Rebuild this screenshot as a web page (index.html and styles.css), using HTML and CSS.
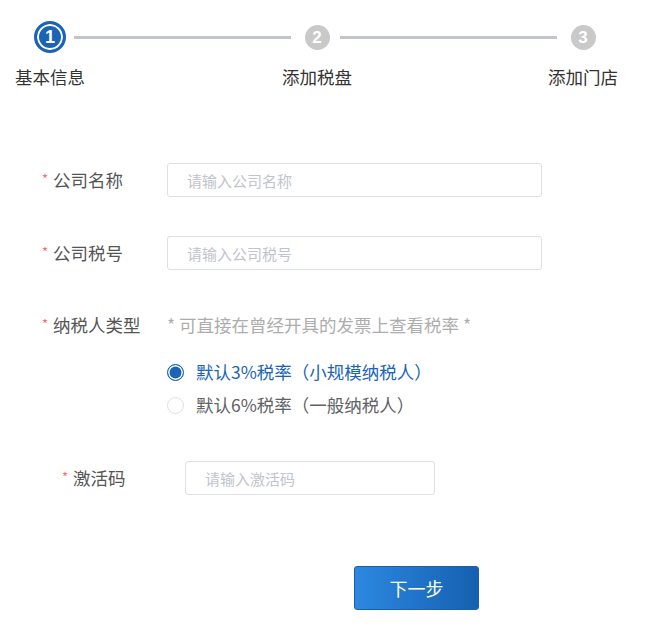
FILE: index.html
```html
<!DOCTYPE html>
<html lang="zh">
<head>
<meta charset="utf-8">
<title>基本信息</title>
<link rel="stylesheet" href="styles.css">
</head>
<body>
<div class="steps">
  <div class="step">
    <div class="dot-box"><span class="dot dot-active">1</span></div>
    <div class="step-label">基本信息</div>
  </div>
  <div class="line line-a"></div>
  <div class="step">
    <div class="dot-box"><span class="dot">2</span></div>
    <div class="step-label">添加税盘</div>
  </div>
  <div class="line line-b"></div>
  <div class="step">
    <div class="dot-box"><span class="dot">3</span></div>
    <div class="step-label">添加门店</div>
  </div>
</div>

<form class="form">
  <div class="row row-1">
    <div class="label"><span class="star">*</span>公司名称</div>
    <div class="input input-wide"><span class="ph">请输入公司名称</span></div>
  </div>
  <div class="row row-2">
    <div class="label"><span class="star">*</span>公司税号</div>
    <div class="input input-wide"><span class="ph">请输入公司税号</span></div>
  </div>
  <div class="row row-3">
    <div class="label"><span class="star">*</span>纳税人类型</div>
    <div class="type-col">
      <div class="hint">* 可直接在曾经开具的发票上查看税率 *</div>
      <div class="radios">
        <div class="radio radio-on"><span class="rb"></span><span class="rt">默认3%税率（小规模纳税人）</span></div>
        <div class="radio"><span class="rb"></span><span class="rt">默认6%税率（一般纳税人）</span></div>
      </div>
    </div>
  </div>
  <div class="row row-4">
    <div class="label"><span class="star">*</span>激活码</div>
    <div class="input input-short"><span class="ph">请输入激活码</span></div>
  </div>
  <div class="btn-row">
    <button type="button" class="btn">下一步</button>
  </div>
</form>
</body>
</html>
```

FILE: styles.css
```css
html, body {
  margin: 0;
  padding: 0;
  background: #fff;
}
body {
  font-family: "Noto Sans CJK SC", "Noto Sans", sans-serif;
  color: #333;
  width: 650px;
}

/* steps */
.steps {
  display: flex;
  padding: 21px 32px 0 15px;
}
.step {
  width: 70px;
  display: flex;
  flex-direction: column;
  align-items: center;
  flex: none;
}
.dot-box {
  height: 32px;
  display: flex;
  align-items: center;
  justify-content: center;
}
.dot {
  width: 25px;
  height: 25px;
  border-radius: 50%;
  background: #c9c9c9;
  color: #fff;
  font-family: "Liberation Sans", Arial, sans-serif;
  font-weight: bold;
  font-size: 17px;
  line-height: 25px;
  text-align: center;
  box-sizing: border-box;
}
.dot-active {
  width: 32px;
  height: 32px;
  line-height: 26px;
  border: 3px solid #1a63b7;
  background: #1a63b7;
  box-shadow: inset 0 0 0 2px #fff;
  font-size: 18px;
}
.step-label {
  margin-top: 12px;
  font-size: 17.5px;
  line-height: 24px;
  color: #333;
  white-space: nowrap;
}
.line {
  flex: 1;
  height: 3px;
  background: #c3c5cc;
  margin-top: 15px;
}
.line-a {
  margin-left: -11px;
  margin-right: -9px;
}
.line-b {
  margin-left: -12px;
  margin-right: -9px;
}

/* form */
.form {
  padding: 74px 0 0 40px;
  margin: 0;
}
.row {
  display: flex;
  align-items: center;
}
.label {
  width: 127px;
  flex: none;
  font-size: 17.5px;
  line-height: 24px;
  color: #555;
  display: flex;
  align-items: flex-start;
}
.star {
  color: #f56c6c;
  font-size: 13px;
  line-height: 16px;
  width: 13px;
  padding-left: 2px;
  padding-top: 3px;
  box-sizing: border-box;
}
.input {
  height: 34px;
  box-sizing: border-box;
  border: 1px solid #dcdfe6;
  border-radius: 3px;
  display: flex;
  align-items: center;
  padding-left: 19px;
}
.input-wide {
  width: 375px;
}
.input-short {
  width: 250px;
}
.ph {
  font-size: 15px;
  color: #c0c4cc;
}
.row-2 {
  margin-top: 39px;
}
.row-3 {
  margin-top: 43px;
  align-items: flex-start;
}
.hint {
  font-size: 17.5px;
  line-height: 24px;
  color: #adadad;
}
.radios {
  margin-top: 23px;
  display: flex;
  flex-direction: column;
  gap: 9px;
}
.radio {
  display: flex;
  align-items: center;
  height: 24px;
}
.rb {
  width: 17px;
  height: 17px;
  border-radius: 50%;
  border: 1px solid #dcdfe6;
  box-sizing: border-box;
  background: #fff;
  margin-right: 12px;
}
.radio-on .rb {
  border: 1.5px solid #1a63b7;
  background: #1a63b7;
  box-shadow: inset 0 0 0 1.5px #fff;
}
.rt {
  font-size: 17.5px;
  line-height: 24px;
  color: #606266;
}
.radio-on .rt {
  color: #1a63b7;
}
.row-4 {
  margin-top: 44px;
  padding-left: 20px;
}
.row-4 .label {
  width: 125px;
}
.btn-row {
  margin-top: 71px;
  padding-left: 314px;
}
.btn {
  width: 125px;
  height: 44px;
  border: 1px solid #1a5fae;
  border-radius: 3px;
  background: linear-gradient(to right, #2d88e1, #1560b0);
  color: #fff;
  font-family: "Noto Sans CJK SC", sans-serif;
  font-size: 18px;
  padding: 0;
  margin: 0;
}
```
